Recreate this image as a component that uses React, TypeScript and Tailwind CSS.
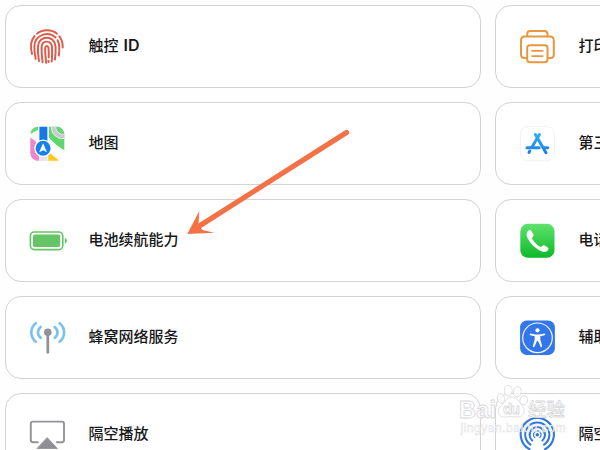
import type { ReactNode } from "react";

const Icon = ({ children }: { children: ReactNode }) => (
  <svg viewBox="0 0 40 41" className="h-[41px] w-10 shrink-0" fill="none" strokeLinecap="round" strokeLinejoin="round">
    {children}
  </svg>
);

const TouchId = () => (
  <Icon>
    <g stroke="#dc5c4c" strokeWidth="1.95">
      <path d="M5 28C3.2 21 3.6 14.5 7.6 10" />
      <path d="M10 7.7C15.5 3.2 24.5 3.2 30 7.7" />
      <path d="M32.2 10.2C34.8 13.5 35.9 17 35.7 21.5" />
      <path d="M8.7 33C7.6 28 7.2 24 7.4 20C8 8.5 21.5 4.5 28.6 11.5" />
      <path d="M30.6 14.2C32.6 18 32.6 24 31.8 29.5" />
      <path d="M12 35.2C11.2 30 10.7 25 11 20.3C11.8 8.8 27.6 8.8 28.5 20.3C28.8 25 28.6 29 28 33.5" />
      <path d="M15.6 36.3C14.8 31 14.4 26 14.6 21C15.2 13.8 24.3 13.8 25 21C25.3 26 25.2 31 24.7 35.5" />
      <path d="M19.2 36.8C18.5 31 18 26 18.2 21.8C18.6 19.3 21.1 19.3 21.5 21.8C21.8 25 21.9 28 21.7 31.5" />
      <path d="M21.5 34.6V36" />
    </g>
  </Icon>
);

const Maps = () => (
  <Icon>
    <clipPath id="mapClip"><rect x="3.3" y="3.8" width="34" height="34" rx="7.5" /></clipPath>
    <g clipPath="url(#mapClip)">
      <path d="M3 3H38V39H3Z" fill="#f8f8fa" />
      <path d="M3 3H11V7L3 11Z" fill="#63d873" />
      <path d="M3 14.5C8 17 12 21 12 28V39H3Z" fill="#ee86cf" />
      <path d="M21.8 3H38V27.5C32 24.5 27 20 21.8 14.5Z" fill="#5fd66e" />
      <circle cx="36" cy="4" r="9.4" stroke="#eef0ee" strokeWidth="5.4" />
      <circle cx="36" cy="4" r="9.4" stroke="#c9c9ce" strokeWidth="3.6" />
      <circle cx="36" cy="4" r="6.6" fill="#64d673" />
      <path d="M22.5 20L38 31.5V38.5L21 26Z" fill="#fff" />
      <path d="M21.3 29L34 39H21.3Z" fill="#fbc91c" />
      <path d="M12.2 30H20.3V39H12.2Z" fill="#e3e3e8" />
      <path d="M11 3H21.8V24H11Z" fill="#fff" />
      <path d="M12.4 3H20.4V24H12.4Z" fill="#1479e5" />
    </g>
    <circle cx="16.1" cy="25.2" r="8.8" fill="#fff" />
    <circle cx="16.1" cy="25.2" r="7.5" fill="#1681ec" />
    <path d="M16.1 20.3L20 29.3L16.1 27.2L12.2 29.3Z" fill="#fff" />
  </Icon>
);

const Battery = () => (
  <Icon>
    <rect x="3.4" y="12" width="32.4" height="17.6" rx="4" stroke="#65c466" strokeWidth="1.6" />
    <rect x="6" y="14.6" width="27.2" height="12.4" rx="1.8" fill="#65c466" />
    <path d="M37.8 18C40.6 18.5 40.6 23 37.8 23.5Z" fill="#65c466" />
  </Icon>
);

const Cellular = () => (
  <Icon>
    <g stroke="#78c3ea" strokeWidth="2.7">
      <path d="M8.8 6.3C2.8 11 2.8 19.8 8.8 24.7M13.7 10C10 13 10 18 13.7 20.8" />
      <path d="M32.6 6.3C38.6 11 38.6 19.8 32.6 24.7M27.7 10C31.4 13 31.4 18 27.7 20.8" />
    </g>
    <path d="M20.8 15V35.3" stroke="#939298" strokeWidth="2.8" />
    <circle cx="20.8" cy="15.2" r="3.8" fill="#939298" />
  </Icon>
);

const AirPlay = () => (
  <Icon>
    <path d="M11.5 28.3H6Q3.8 28.3 3.8 26.1V9.8Q3.8 7.6 6 7.6H34.8Q37 7.6 37 9.8V26.1Q37 28.3 34.8 28.3H29.2" stroke="#929297" strokeWidth="1.9" strokeLinecap="butt" />
    <path d="M20.3 23.7L30.3 34.5H10.3Z" fill="#8e8e93" stroke="#8e8e93" strokeWidth=".8" />
  </Icon>
);

const Printer = () => (
  <Icon>
    <g stroke="#e9973e" strokeWidth="2">
      <path d="M10.2 10.3V8Q10.2 5 13.2 5H27.5Q30.5 5 30.5 8V10.3" />
      <path d="M9.8 32H7.5Q4 32 4 28.5V14.3Q4 10.5 7.8 10.5H33Q36.8 10.5 36.8 14.3V28.5Q36.8 32 33.3 32H31" />
      <rect x="10.2" y="19.2" width="20.3" height="17" rx="2.6" />
      <path d="M15 24.9H25.8M15 30.1H25.8" strokeWidth="1.6" />
    </g>
  </Icon>
);

const AppStore = () => (
  <Icon>
    <linearGradient id="storeBlue" gradientUnits="userSpaceOnUse" x1="20" y1="9" x2="20" y2="31">
      <stop stopColor="#2cb4f8" /><stop offset="1" stopColor="#217be7" />
    </linearGradient>
    <rect x="3.3" y="3.6" width="34.2" height="34.2" rx="7.5" fill="#fff" stroke="#f0f0f2" strokeWidth=".9" />
    <g stroke="url(#storeBlue)" strokeWidth="3">
      <path d="M22.4 11.5L14.8 24.4M12.8 28L12 29.4" />
      <path d="M18.4 11.5L29 29.8" />
      <path d="M10 24.7H22.2M27.2 24.7H30.8" />
    </g>
  </Icon>
);

const Phone = () => (
  <Icon>
    <linearGradient id="phoneGreen" x1="0" y1="0" x2="0" y2="1">
      <stop stopColor="#5fe26c" /><stop offset="1" stopColor="#0db92a" />
    </linearGradient>
    <rect x="3.3" y="3.8" width="34.2" height="34" rx="7.6" fill="url(#phoneGreen)" />
    <path d="M10.2 12.2C11.5 10 13.2 9.2 14.4 11L16.3 14.1C17 15.4 16.5 16.3 15.3 17.4C14.8 18 15.1 18.7 15.6 19.5C17.3 22.3 19.6 24.7 22.5 26.4C23.3 26.9 24 27.1 24.6 26.5C25.8 25.2 26.8 24.9 28 25.7L30.9 27.6C32.2 28.6 31.4 30.1 29.8 31.3C27.6 32.9 24.3 31.8 21 29.6C16.7 26.8 13.4 23.4 11.2 19.3C9.7 16.4 9.1 14.2 10.2 12.2Z" fill="#fff" />
  </Icon>
);

const Accessibility = () => (
  <Icon>
    <rect x="3.1" y="3.6" width="34.8" height="34.4" rx="6.8" fill="#3376e9" />
    <circle cx="20.5" cy="20.8" r="14.8" stroke="#f2f6ff" strokeWidth="1.2" />
    <circle cx="20.5" cy="13.3" r="2.1" fill="#fff" />
    <path d="M13.5 16.6L18.3 17.5H22.7L27.5 16.6C28.6 16.6 28.6 17.9 27.6 18.2L23.3 19.3V22.5L25.1 29C25.3 30.3 23.9 30.6 23.5 29.5L21 24H20L17.5 29.5C17.1 30.6 15.7 30.3 15.9 29L17.7 22.5V19.3L13.4 18.2C12.4 17.9 12.4 16.6 13.5 16.6Z" fill="#fff" />
  </Icon>
);

const AirDrop = () => (
  <Icon>
    <g stroke="#3478dd" strokeWidth="2.1">
      <path d="M12.5 35.2A16.6 16.6 0 1 1 28.1 35.2" />
      <path d="M13.5 30.6A12.1 12.1 0 1 1 27.1 30.6" />
      <path d="M15.2 26.5A7.7 7.7 0 1 1 25.4 26.5" />
      <path d="M17.8 23.6A3.8 3.8 0 1 1 22.8 23.6" strokeWidth="1.2" />
    </g>
    <circle cx="20.3" cy="20.7" r="1.8" fill="#3478dd" />
  </Icon>
);

const topics = [
  { name: <>触控 <b className="ml-[1px] text-[16px] font-semibold">ID</b></>, icon: <TouchId /> },
  { name: "打印", icon: <Printer /> },
  { name: "地图", icon: <Maps /> },
  { name: "第三方", icon: <AppStore /> },
  { name: "电池续航能力", icon: <Battery /> },
  { name: "电话", icon: <Phone /> },
  { name: "蜂窝网络服务", icon: <Cellular /> },
  { name: "辅助功能", icon: <Accessibility /> },
  { name: "隔空播放", icon: <AirPlay /> },
  { name: "隔空投送", icon: <AirDrop /> },
];

const Watermark = () => (
  <svg viewBox="0 0 150 75" className="absolute left-[450px] top-[375px] h-[75px] w-[150px]">
    <g fill="#fff" fillOpacity=".72" stroke="#d8d8da" strokeWidth=".8" strokeLinejoin="round">
      <text x="9" y="43" fontSize="23" fontWeight="700" fontFamily="Liberation Sans, sans-serif" textLength="37" lengthAdjust="spacingAndGlyphs">Bai</text>
      <ellipse cx="51" cy="23.5" rx="3.5" ry="5" transform="rotate(-15 51 23.5)" />
      <ellipse cx="58.2" cy="15.7" rx="3.9" ry="5.3" />
      <ellipse cx="67.3" cy="16.8" rx="3.9" ry="5.2" transform="rotate(12 67.3 16.8)" />
      <ellipse cx="73.8" cy="25.2" rx="3.7" ry="4.7" transform="rotate(20 73.8 25.2)" />
      <path d="M62 22C67 22 69 27 72 30C76 34 75 42 68 42C64 42 60 41 56 42C49 43 46 37 50 32C54 29 56 22 62 22Z" />
      <text x="53" y="39" fontSize="15" fontWeight="700" fontFamily="Liberation Sans, sans-serif" textLength="17">du</text>
      <text x="78" y="41" fontSize="18.5" fontWeight="500" fontFamily="Noto Sans CJK SC, sans-serif" textLength="37">经验</text>
    </g>
    <text x="10.5" y="56.5" fontSize="12" fontFamily="Liberation Sans, sans-serif" textLength="105" fill="#fff" fillOpacity=".8" stroke="#e2e2e4" strokeWidth=".5">jingyan.baidu.com</text>
  </svg>
);

export default function App() {
  return (
    <main className="relative h-[450px] w-[600px] overflow-hidden bg-[#fefefe] pl-[5px] pt-[5px] font-['Inter','Noto_Sans_CJK_SC',sans-serif] text-[#171719]">
      <div className="grid w-[966px] grid-cols-2 gap-3.5">
        {topics.map((topic, index) => (
          <div key={index} className="flex h-[83px] items-center gap-[21.5px] rounded-[16px] border border-[#d3d3d6] bg-white pl-[21px]">
            {topic.icon}
            <span className="mb-[2px] whitespace-nowrap text-[15px] font-medium leading-5">{topic.name}</span>
          </div>
        ))}
      </div>
      <svg viewBox="0 0 180 125" className="absolute left-[180px] top-[120px] h-[125px] w-[180px]">
        <path d="M166.5 12.5L17 107.5" stroke="#f37145" strokeWidth="5.2" strokeLinecap="round" />
        <path d="M7.3 114L19.3 91L18.5 104.5L22.5 110L34.3 112.7Z" fill="#f37145" />
      </svg>
      <Watermark />
    </main>
  );
}
